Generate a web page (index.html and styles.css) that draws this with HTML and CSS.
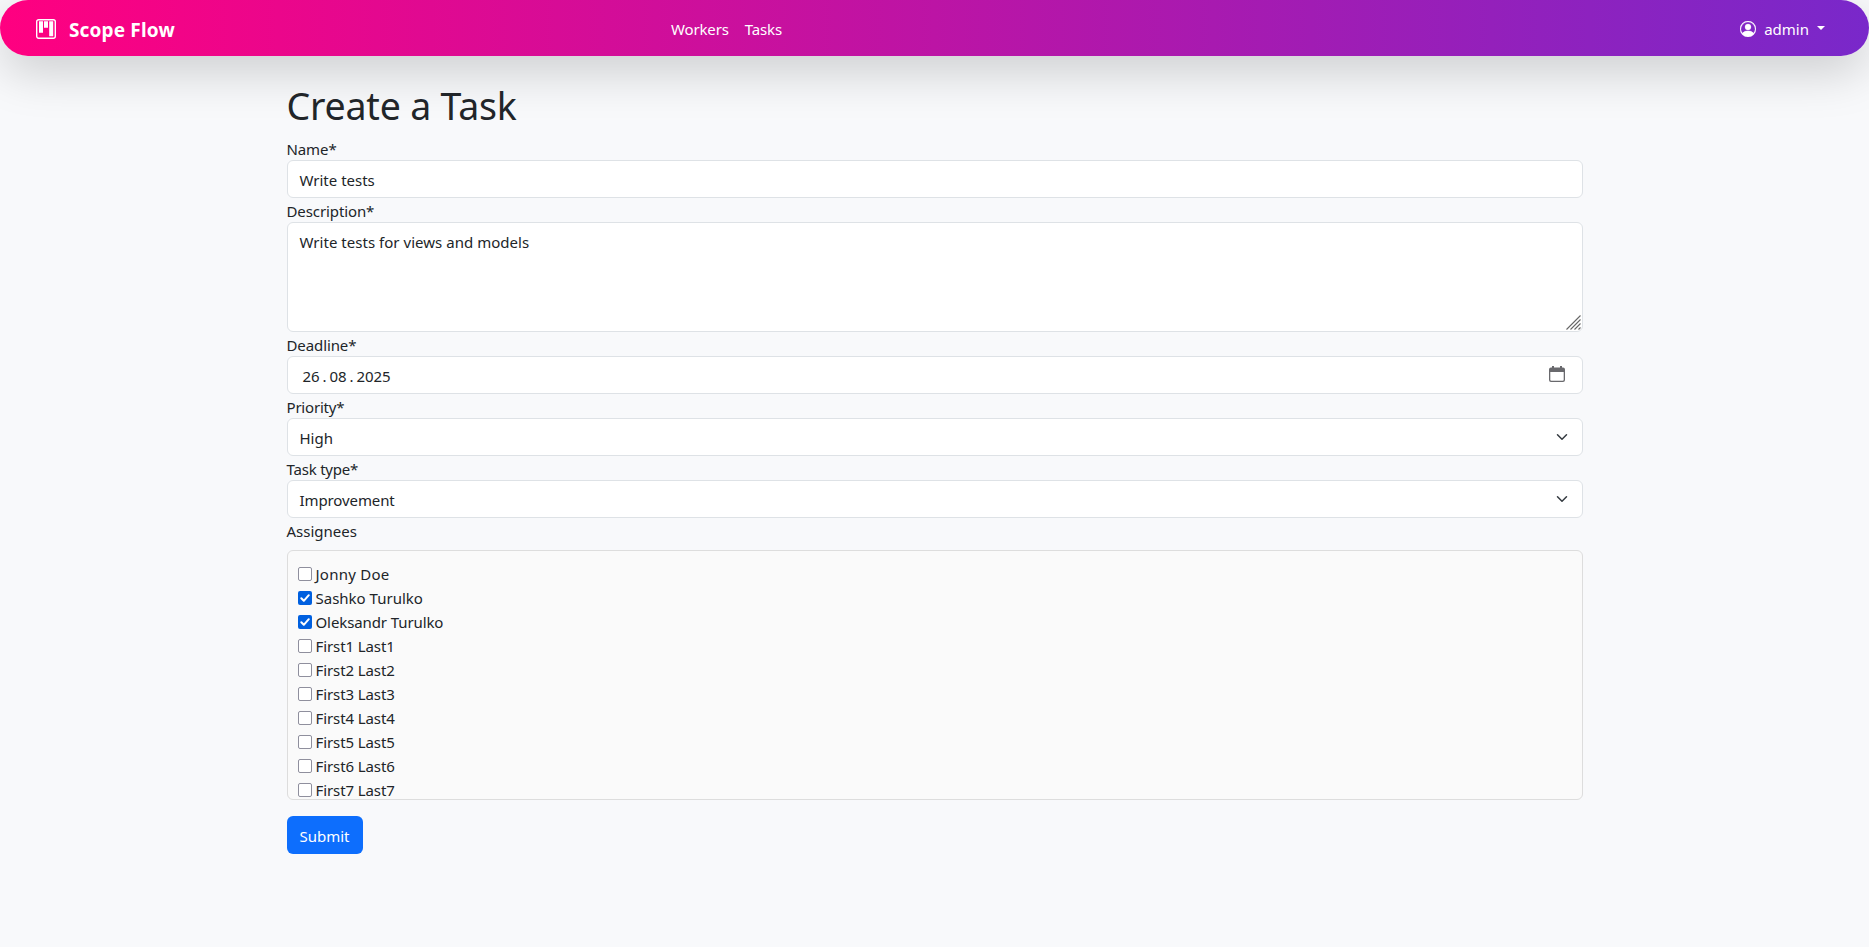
FILE: index.html
```html
<!DOCTYPE html>
<html lang="en">
<head>
<meta charset="utf-8">
<title>Create a Task</title>
<link rel="stylesheet" href="styles.css">
</head>
<body>
<nav class="navbar">
  <a class="brand">
    <svg class="brand-icon" viewBox="0 0 20 20"><rect x=".7" y=".7" width="18.600" height="18.600" rx="2" fill="none" stroke="#fff" stroke-width="1.400"/><path fill="#fff" d="M3 2.300h4v11.400H3zM8 2.300h4v6.400H8zM13.200 2.300h4v15h-4z"/></svg>
    <span class="brand-name">Scope Flow</span>
  </a>
  <div class="links"><a>Workers</a><a>Tasks</a></div>
  <div class="user">
    <svg class="user-icon" viewBox="0 0 16 16" fill="#fff" stroke="#fff" stroke-width=".25"><path d="M11 6a3 3 0 1 1-6 0 3 3 0 0 1 6 0"/><path fill-rule="evenodd" d="M0 8a8 8 0 1 1 16 0A8 8 0 0 1 0 8m8-7a7 7 0 0 0-5.468 11.370C3.242 11.226 4.805 10 8 10s4.757 1.225 5.468 2.370A7 7 0 0 0 8 1"/><path d="M2.600 12.400C3.500 11 5 10 8 10s4.500 1 5.400 2.400A7 7 0 0 1 2.600 12.400"/></svg>
    <span class="user-name">admin</span>
    <span class="caret"></span>
  </div>
</nav>
<main class="container">
  <h1>Create a Task</h1>
  <form>
    <label class="tight">Name*</label>
    <div class="control"><span>Write tests</span></div>
    <label class="tight">Description*</label>
    <div class="control area"><span class="loose">Write tests for views and models</span>
      <svg class="grip" viewBox="0 0 15 15" stroke="#666" stroke-width="1.100" fill="none"><path d="M.5 14.500l14-14M4.500 14.500l10-10M8.500 14.500l6-6M12.500 14.500l2-2"/></svg>
    </div>
    <label class="tight">Deadline*</label>
    <div class="control date"><span class="date-value"><span>26</span><span class="dot">.</span><span>08</span><span class="dot">.</span><span>2025</span></span>
      <svg class="calendar" viewBox="0 0 16 16"><path fill="#69696d" fill-rule="evenodd" d="M3 0h2v1.500h6V0h2v1.500h1a2 2 0 0 1 2 2V14a2 2 0 0 1-2 2H2a2 2 0 0 1-2-2V3.500a2 2 0 0 1 2-2h1zM1.300 6v7.700a1 1 0 0 0 1 1h11.400a1 1 0 0 0 1-1V6z"/></svg>
    </div>
    <label class="tighter">Priority*</label>
    <div class="control"><span>High</span>
      <svg class="chevron" viewBox="0 0 16 16"><path fill="none" stroke="#343a40" stroke-linecap="round" stroke-linejoin="round" stroke-width="2" d="m2 5 6 6 6-6"/></svg></div>
    <label class="tighter">Task type*</label>
    <div class="control"><span class="tight">Improvement</span>
      <svg class="chevron" viewBox="0 0 16 16"><path fill="none" stroke="#343a40" stroke-linecap="round" stroke-linejoin="round" stroke-width="2" d="m2 5 6 6 6-6"/></svg></div>
    <label class="l-assign">Assignees</label>
    <div class="assignees">
      <div class="person"><i class="box"></i><span class="wide">Jonny Doe</span></div>
      <div class="person"><i class="box on"><svg viewBox="0 0 14 14"><path d="M3.300 7.300l2.500 2.500 5-5.600"/></svg></i><span>Sashko Turulko</span></div>
      <div class="person"><i class="box on"><svg viewBox="0 0 14 14"><path d="M3.300 7.300l2.500 2.500 5-5.600"/></svg></i><span class="tight">Oleksandr Turulko</span></div>
      <div class="person"><i class="box"></i><span class="tight">First1 Last1</span></div>
      <div class="person"><i class="box"></i><span class="tight">First2 Last2</span></div>
      <div class="person"><i class="box"></i><span class="tight">First3 Last3</span></div>
      <div class="person"><i class="box"></i><span class="tight">First4 Last4</span></div>
      <div class="person"><i class="box"></i><span class="tight">First5 Last5</span></div>
      <div class="person"><i class="box"></i><span class="tight">First6 Last6</span></div>
      <div class="person"><i class="box"></i><span class="tight">First7 Last7</span></div>
    </div>
    <button type="button" class="submit">Submit</button>
  </form>
</main>
</body>
</html>
```
FILE: styles.css
```css
* { box-sizing: border-box; }
body {
  margin: 0;
  min-height: 100vh;
  background: #f8f9fb;
  color: #212529;
  font: 15px/24px "Noto Sans", "Open Sans", sans-serif;
  overflow: hidden;
}
.navbar {
  height: 56px;
  display: grid;
  grid-template-columns: 671px 1fr auto;
  align-items: center;
  padding-right: 44px;
  border-radius: 50px;
  background: linear-gradient(90deg, #ff0080, #7928ca);
  box-shadow: 0 16px 48px rgba(0, 0, 0, .175);
  color: #fff;
}
.brand { display: flex; align-items: center; padding-left: 36px; gap: 13px; }
.brand-icon { width: 20px; height: 20px; margin-top: 2px; }
.brand-name { font-size: 19px; font-weight: 700; line-height: 30px; padding-top: 3px; letter-spacing: .15px; }
.links { display: flex; gap: 16px; padding-top: 2px; letter-spacing: -.15px; }
.user { display: flex; align-items: center; }
.user-icon { width: 16px; height: 16px; margin: 2px 8px 0 0; }
.user-name { padding-top: 2px; }
.caret { margin-left: 8px; border: 4.500px solid transparent; border-top-color: #fff; border-bottom: 0; }
.container { width: 1320px; margin: 0 auto; padding: 24px 12px 0; }
h1 { margin: 0; height: 56px; padding-top: 2px; font-size: 37.500px; font-weight: 400; line-height: 48px; letter-spacing: -.2px; }
form { display: flex; flex-direction: column; }
label { display: block; height: 24px; padding-top: 1px; align-self: flex-start; }
.tight { letter-spacing: -.1px; }
.tighter { letter-spacing: -.2px; }
.loose { letter-spacing: .03px; }
.wide { letter-spacing: .25px; }
.control {
  display: flex;
  justify-content: space-between;
  height: 38px;
  padding: 7px 12px 5px;
  border: 1px solid #dee2e6;
  border-radius: 6px;
  background: #fff;
}
.area { height: 110px; padding-right: 1px; padding-bottom: 1px; }
.grip { width: 15px; height: 15px; align-self: flex-end; }
.date { padding-left: 15px; padding-right: 17px; }
.date-value { display: flex; letter-spacing: -.1px; }
.dot { width: 10px; text-align: center; }
.calendar { width: 16px; height: 16px; margin-top: 2px; }
.chevron { width: 12px; height: 12px; margin: 5px 2px 0 0; }
.l-assign { margin-bottom: 8px; }
.assignees {
  height: 250px;
  padding: 11px 10px 0;
  border: 1px solid #ddd;
  border-radius: 6px;
  background: #fafafa;
  overflow: hidden;
}
.person { display: flex; height: 24px; align-items: center; gap: 4px; }
.box { width: 14px; height: 14px; border: 1px solid #8f8f9d; border-radius: 2px; background: #fff; }
.on { border: 0; background: #0060df; }
.box svg { display: block; width: 14px; height: 14px; fill: none; stroke: #fff; stroke-width: 2; stroke-linecap: round; stroke-linejoin: round; }
.submit {
  align-self: flex-start;
  width: 76px;
  height: 38px;
  margin-top: 16px;
  padding: 1px 0 0;
  border: 0;
  border-radius: 6px;
  background: #0d6efd;
  color: #fff;
  font: inherit;
}
```
